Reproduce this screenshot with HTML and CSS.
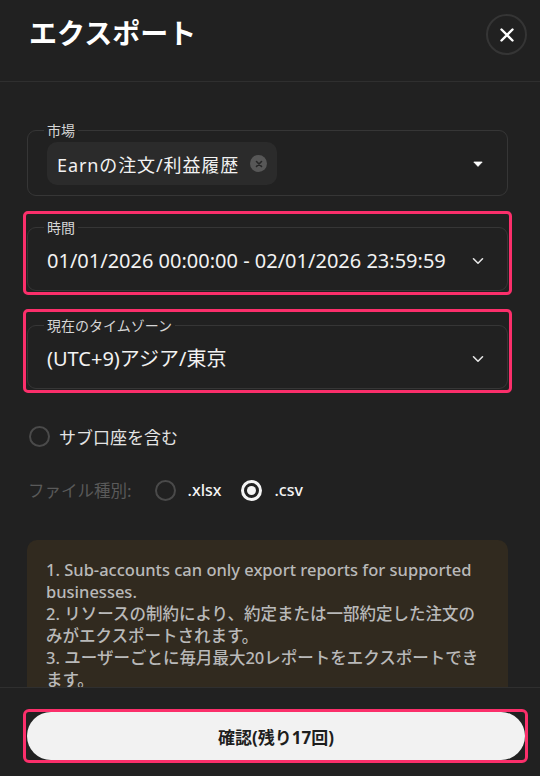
FILE: index.html
```html
<!DOCTYPE html>
<html lang="ja">
<head>
<meta charset="utf-8">
<title>エクスポート</title>
<link rel="stylesheet" href="styles.css">
</head>
<body>
<div class="modal">
  <header class="head">
    <h1 class="title">エクスポート</h1>
    <button class="close" aria-label="close">
      <svg width="14" height="14" viewBox="0 0 14 14"><path d="M1.5 1.5 L12.5 12.5 M12.5 1.5 L1.5 12.5" stroke="#fff" stroke-width="2.4" stroke-linecap="round"/></svg>
    </button>
  </header>

  <main class="body">
    <fieldset class="field market">
      <legend class="legend">市場</legend>
      <div class="row">
        <span class="chip">Earnの注文/利益履歴<span class="chip-x"><svg width="8" height="8" viewBox="0 0 8 8"><path d="M1.5 1.5 L6.5 6.5 M6.5 1.5 L1.5 6.5" stroke="#262626" stroke-width="1.6" stroke-linecap="round"/></svg></span></span>
        <svg class="icon" width="12" height="12" viewBox="0 0 12 12"><path d="M1.8 4 H10.2 L6 8.4 Z" fill="#fff" stroke="#fff" stroke-width="0.8" stroke-linejoin="round"/></svg>
      </div>
    </fieldset>

    <div class="mark">
      <fieldset class="field">
        <legend class="legend">時間</legend>
        <div class="row value-row">
          <span class="value">01/01/2026 00:00:00 - 02/01/2026 23:59:59</span>
          <svg class="icon" width="12" height="12" viewBox="0 0 12 12"><path d="M1.5 3.8 L6 8.2 L10.5 3.8" fill="none" stroke="#e6e6e6" stroke-width="1.6" stroke-linecap="round" stroke-linejoin="round"/></svg>
        </div>
      </fieldset>
    </div>

    <div class="mark mark-tz">
      <fieldset class="field">
        <legend class="legend">現在のタイムゾーン</legend>
        <div class="row value-row">
          <span class="value">(UTC+9)アジア/東京</span>
          <svg class="icon" width="12" height="12" viewBox="0 0 12 12"><path d="M1.5 3.8 L6 8.2 L10.5 3.8" fill="none" stroke="#e6e6e6" stroke-width="1.6" stroke-linecap="round" stroke-linejoin="round"/></svg>
        </div>
      </fieldset>
    </div>

    <label class="check"><span class="radio"></span>サブ口座を含む</label>

    <div class="filetype">
      <span class="ft-label">ファイル種別:</span>
      <label class="opt"><span class="radio"></span>.xlsx</label>
      <label class="opt"><span class="radio on"></span>.csv</label>
    </div>

    <div class="notice">
      <p>1. Sub-accounts can only export reports for supported businesses.</p>
      <p>2. リソースの制約により、約定または一部約定した注文のみがエクスポートされます。</p>
      <p>3. ユーザーごとに毎月最大20レポートをエクスポートできます。</p>
    </div>
  </main>

  <footer class="foot">
    <div class="mark mark-btn">
      <button class="confirm">確認(残り17回)</button>
    </div>
  </footer>
</div>
</body>
</html>
```

FILE: styles.css
```css
* { box-sizing: border-box; }
html, body {
  margin: 0;
  padding: 0;
  background: #212121;
}
body {
  font-family: "Noto Sans", "Noto Sans CJK JP", sans-serif;
  color: #f0f0f0;
}
.modal {
  width: 540px;
  height: 776px;
  display: flex;
  flex-direction: column;
  background: #212121;
  overflow: hidden;
}
.head {
  height: 82px;
  flex: none;
  display: flex;
  justify-content: space-between;
  align-items: flex-start;
  padding: 14px 13px 0 29px;
  border-bottom: 1px solid #2f2f2f;
}
.title {
  margin: 0;
  font-family: "Noto Sans CJK JP", sans-serif;
  font-size: 28px;
  line-height: 36px;
  font-weight: 700;
  color: #fff;
}
.close {
  width: 41px;
  height: 41px;
  border-radius: 50%;
  border: 2px solid #353535;
  background: transparent;
  display: flex;
  align-items: center;
  justify-content: center;
  padding: 0;
}
.body {
  flex: 1;
  overflow: hidden;
  padding: 41px 32px 0 27px;
}
.field {
  margin: 0;
  padding: 0 23px 15px 19px;
  border: 1px solid #363636;
  border-radius: 9px;
  min-width: 0;
}
.legend {
  font-family: "Noto Sans CJK JP", sans-serif;
  font-size: 14px;
  line-height: 14px;
  padding: 0 3px;
  margin-left: -3px;
  color: #d6d6d6;
}
.row {
  display: flex;
  align-items: center;
  justify-content: space-between;
}
.market { padding-bottom: 10px; }
.market .row { margin-top: 5px; }
.chip {
  height: 43px;
  display: inline-flex;
  align-items: center;
  gap: 11px;
  padding: 0 10px 0 10px;
  background: #2b2b2b;
  border-radius: 10px;
  font-size: 18px;
  letter-spacing: 0.9px;
  color: #f2f2f2;
}
.chip-x {
  width: 17px;
  height: 17px;
  border-radius: 50%;
  background: #575757;
  display: flex;
  align-items: center;
  justify-content: center;
}
.icon { flex: none; }
.value-row {
  margin-top: 13px;
  height: 28px;
}
.value {
  font-size: 20px;
  line-height: 28px;
  color: #f2f2f2;
  white-space: nowrap;
}
.mark {
  margin: 15px -4px 0 -4px;
  border: 3px solid #fb2f6b;
  border-radius: 5px;
  padding: 6px 1px 1px 1px;
}
.mark-tz { margin-top: 14px; }
.check {
  margin-top: 31px;
  display: flex;
  align-items: center;
  gap: 9px;
  height: 24px;
  padding-left: 2px;
  font-family: "Noto Sans CJK JP", sans-serif;
  font-size: 17px;
  color: #e4e4e4;
}
.radio {
  width: 21px;
  height: 21px;
  border-radius: 50%;
  border: 2px solid #4a4a4a;
  flex: none;
  display: flex;
  align-items: center;
  justify-content: center;
}
.radio.on {
  border: 3px solid #f4f4f4;
}
.radio.on::after {
  content: "";
  width: 9px;
  height: 9px;
  border-radius: 50%;
  background: #f4f4f4;
}
.filetype {
  margin-top: 30px;
  display: flex;
  align-items: center;
  height: 24px;
  padding-left: 1px;
}
.ft-label {
  font-family: "Noto Sans CJK JP", sans-serif;
  font-size: 16.5px;
  color: #5a5a5a;
  margin-right: 23px;
}
.opt {
  display: flex;
  align-items: center;
  gap: 12px;
  font-size: 16px;
  font-weight: 500;
  color: #f4f4f4;
  margin-right: 20px;
}
.notice {
  margin-top: 38px;
  background: #312a1f;
  border-radius: 10px;
  padding: 19px 19px 20px 19px;
  font-size: 16.5px;
  line-height: 22px;
  color: #b9b9b9;
  font-weight: 500;
}
.notice p { margin: 0; }
.foot {
  flex: none;
  height: 89px;
  border-top: 1px solid #2f2f2f;
  padding: 21px 12px 0 23px;
}
.mark-btn {
  margin: 0;
  padding: 0 0 0 1px;
  border-radius: 6px;
  overflow: hidden;
}
.confirm {
  display: block;
  width: 100%;
  height: 48px;
  border: none;
  border-radius: 24px;
  background: #f2f2f2;
  font-family: "Noto Sans", "Noto Sans CJK JP", sans-serif;
  font-size: 17px;
  font-weight: 700;
  color: #1e1e1e;
}
```
